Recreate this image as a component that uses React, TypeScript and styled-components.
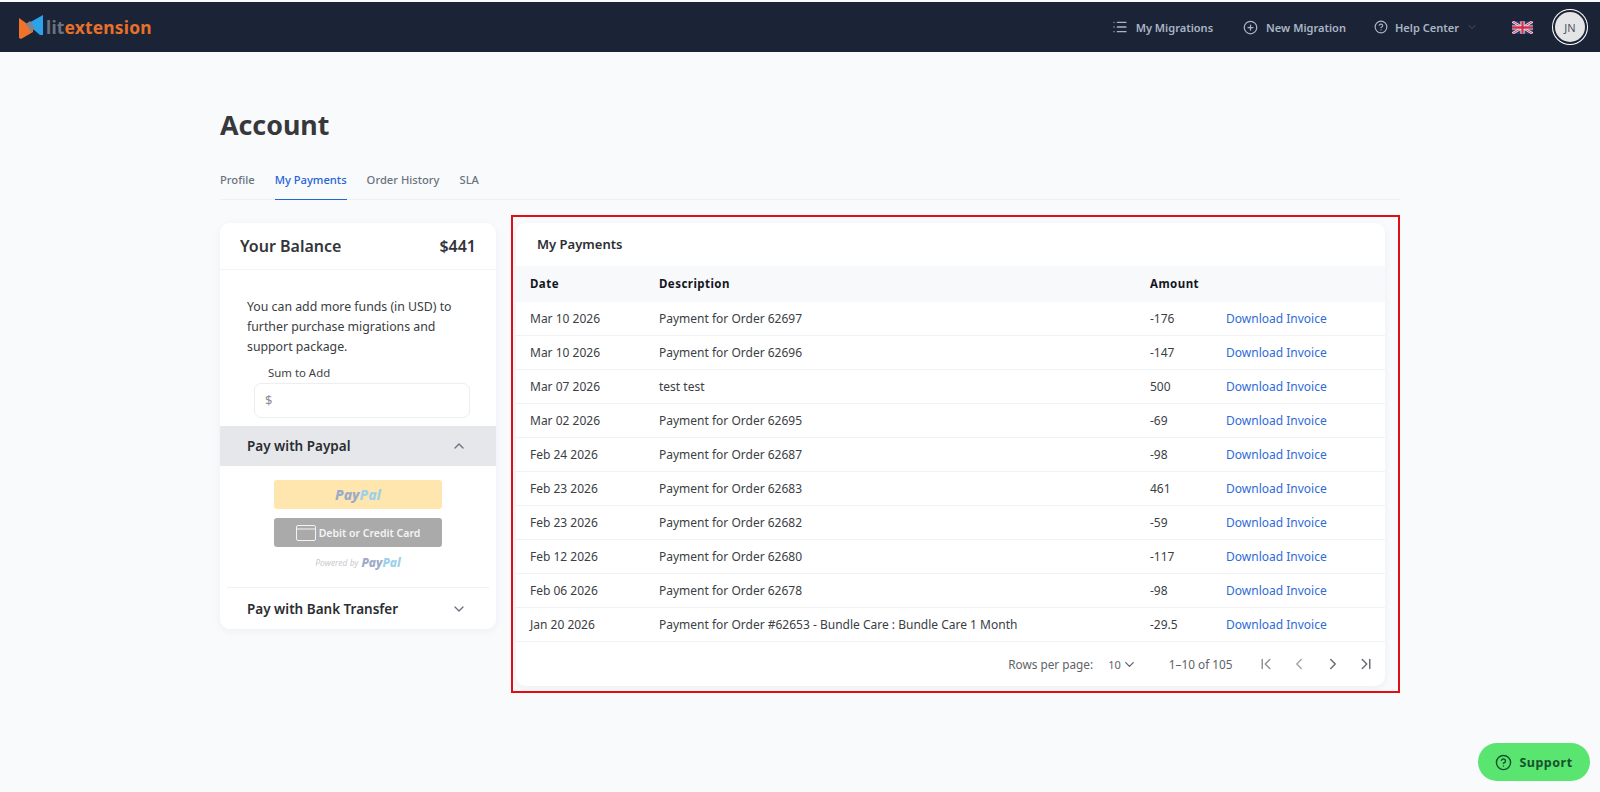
import React from "react";
import styled, { createGlobalStyle } from "styled-components";
import {
  ChevronDown,
  ChevronFirst,
  ChevronLast,
  ChevronLeft,
  ChevronRight,
  ChevronUp,
  CircleHelp,
  CirclePlus,
  List,
} from "lucide-react";

const GlobalStyle = createGlobalStyle`
  html, body {
    margin: 0;
    padding: 0;
    background: #f9fafc;
    font-family: "Noto Sans", "Open Sans", sans-serif;
    color: #2f3237;
  }
  * { box-sizing: border-box; }
`;

const Page = styled.div`
  width: 1600px;
  height: 792px;
  overflow: hidden;
  position: relative;
  padding-top: 2px;
`;

const Header = styled.header`
  height: 50px;
  background: #1b2436;
  display: flex;
  align-items: center;
  padding: 0 15px 0 19px;
`;

const Logo = styled.div`
  display: flex;
  align-items: center;
  gap: 3px;
`;

const LogoText = styled.span`
  font-size: 17.4px;
  font-weight: 700;
  letter-spacing: 0.2px;
  color: #e8702a;

  span {
    color: #6b7480;
  }
`;

const Nav = styled.nav`
  margin-left: auto;
  display: flex;
  align-items: center;
`;

const NavItem = styled.div<{ $gap: number; $iconGap?: number }>`
  display: flex;
  align-items: center;
  gap: ${(p) => p.$iconGap ?? 8}px;
  margin-right: ${(p) => p.$gap}px;
  font-size: 11.05px;
  font-weight: 600;
  color: #aab4c4;
`;

const Avatar = styled.div`
  width: 30px;
  height: 30px;
  margin-left: 22px;
  border-radius: 50%;
  background: #e4e4e6;
  box-shadow: 0 0 0 2px #1b2436, 0 0 0 3px #ffffff;
  display: flex;
  align-items: center;
  justify-content: center;
  font-size: 11px;
  color: #50545c;
`;

const Main = styled.main`
  padding: 0 200px 0 220px;
`;

const Title = styled.h1`
  margin: 53px 0 0;
  font-size: 26.8px;
  line-height: 40px;
  font-weight: 700;
  color: #36383c;
`;

const Tabs = styled.div`
  display: flex;
  gap: 20px;
  margin-top: 20px;
  height: 35px;
  border-bottom: 1px solid #eef0f3;
`;

const Tab = styled.div<{ $active?: boolean }>`
  height: 35px;
  line-height: 30px;
  font-size: 11.2px;
  font-weight: 500;
  color: ${(p) => (p.$active ? "#2563d8" : "#6b7280")};
  border-bottom: 1px solid ${(p) => (p.$active ? "#2563d8" : "transparent")};
`;

const Columns = styled.div`
  display: flex;
  align-items: flex-start;
  margin-top: 15px;
`;

const Card = styled.section`
  background: #ffffff;
  border-radius: 10px;
  box-shadow: 0 2px 8px rgba(30, 40, 60, 0.05);
`;

const BalanceCard = styled(Card)`
  width: 276px;
  margin-top: 8px;
  margin-right: 15px;
  overflow: hidden;
`;

const BalanceHead = styled.div`
  height: 47px;
  display: flex;
  align-items: center;
  justify-content: space-between;
  padding: 0 20px;
  border-bottom: 1px solid #f3f4f6;
  font-size: 16px;
  font-weight: 600;
  color: #33353a;
`;

const BalanceBody = styled.div`
  padding: 27px 20px 8px 27px;
  font-size: 12.3px;
  line-height: 20px;
  color: #3a3d42;
`;

const SumLabel = styled.div`
  margin: 6px 0 0 21px;
  font-size: 11.4px;
  line-height: 20px;
  color: #3f4247;
`;

const SumInput = styled.div`
  margin: 0 0 0 7px;
  width: 216px;
  height: 35px;
  border: 1px solid #eceef1;
  border-radius: 7px;
  padding-left: 10px;
  font-size: 13px;
  line-height: 33px;
  color: #8a8e95;
`;

const AccordionHead = styled.div<{ $open?: boolean }>`
  height: ${(p) => (p.$open ? 40 : 41)}px;
  display: flex;
  align-items: center;
  justify-content: space-between;
  padding: 0 29px 0 27px;
  font-size: 13.5px;
  font-weight: 600;
  color: #2b2d31;
  background: ${(p) => (p.$open ? "#e5e7eb" : "#ffffff")};
`;

const PaypalPanel = styled.div`
  display: flex;
  flex-direction: column;
  align-items: center;
  padding: 14px 0 17px;
  margin: 0 7px;
  border-bottom: 1px solid #f0f1f3;
`;

const PayButton = styled.div<{ $bg: string }>`
  width: 168px;
  height: 29px;
  margin-bottom: 9px;
  border-radius: 3px;
  background: ${(p) => p.$bg};
  display: flex;
  align-items: center;
  justify-content: center;
  gap: 3px;
  color: #f4f4f4;
  font-size: 10.5px;
  font-weight: 600;
`;

const PaypalMark = styled.span<{ $size: number }>`
  font-size: ${(p) => p.$size}px;
  font-weight: 800;
  font-style: italic;
  color: #9aabc9;

  span {
    color: #9ed0ea;
  }
`;

const Powered = styled.div`
  display: flex;
  align-items: center;
  gap: 3px;
  margin-top: -2px;
  font-size: 8.5px;
  font-style: italic;
  color: #c9cbcf;
  height: 16px;
`;

const Highlight = styled.div`
  width: 889px;
  height: 478px;
  border: 2px solid #e00f14;
  padding: 6px 13px 5px 3px;
`;

const PaymentsCard = styled(Card)`
  height: 463px;
  overflow: hidden;
`;

const CardTitle = styled.div`
  height: 43px;
  padding: 7px 0 0 21px;
  font-size: 13px;
  line-height: 28px;
  font-weight: 600;
  color: #2c2e33;
`;

const Table = styled.div`
  display: grid;
  grid-template-columns: 143px 491px 76px 1fr;
`;

const Row = styled.div`
  display: contents;
`;

const HeadCell = styled.div`
  height: 36px;
  line-height: 36px;
  background: #f8f9fb;
  padding-left: 14px;
  font-size: 11.5px;
  font-weight: 700;
  letter-spacing: 0.45px;
  color: #14161d;

  &:nth-child(2),
  &:nth-child(3),
  &:nth-child(4) {
    padding-left: 0;
  }
`;

const Cell = styled.div`
  height: 34px;
  line-height: 33px;
  border-bottom: 1px solid #f1f2f4;
  padding-left: 14px;
  font-size: 12px;
  color: #3b3e44;
  white-space: nowrap;

  &:nth-child(2),
  &:nth-child(3),
  &:nth-child(4) {
    padding-left: 0;
  }
`;

const InvoiceLink = styled.a`
  color: #2f6bd9;
`;

const Pagination = styled.div`
  height: 44px;
  display: flex;
  align-items: center;
  justify-content: flex-end;
  padding-right: 10px;
  font-size: 11.8px;
  color: #5f6368;
`;

const PerPage = styled.div`
  display: flex;
  align-items: center;
  gap: 1px;
  margin: 0 32px 0 15px;
  font-size: 11px;
`;

const PageButtons = styled.div`
  display: flex;
  align-items: center;
  gap: 15.5px;
  margin-left: 24px;
  color: #6b6f75;
`;

const SupportButton = styled.button`
  position: absolute;
  right: 10px;
  bottom: 11px;
  width: 112px;
  height: 38px;
  border: 0;
  border-radius: 20px;
  background: #5ae571;
  color: #14532d;
  display: flex;
  align-items: center;
  justify-content: center;
  gap: 7px;
  font-family: inherit;
  font-size: 12.5px;
  font-weight: 700;
  letter-spacing: 0.5px;
`;

const payments = [
  ["Mar 10 2026", "Payment for Order 62697", "-176"],
  ["Mar 10 2026", "Payment for Order 62696", "-147"],
  ["Mar 07 2026", "test test", "500"],
  ["Mar 02 2026", "Payment for Order 62695", "-69"],
  ["Feb 24 2026", "Payment for Order 62687", "-98"],
  ["Feb 23 2026", "Payment for Order 62683", "461"],
  ["Feb 23 2026", "Payment for Order 62682", "-59"],
  ["Feb 12 2026", "Payment for Order 62680", "-117"],
  ["Feb 06 2026", "Payment for Order 62678", "-98"],
  ["Jan 20 2026", "Payment for Order #62653 - Bundle Care : Bundle Care 1 Month", "-29.5"],
];

const LogoIcon = () => (
  <svg width="24" height="24" viewBox="0 0 24 24">
    <path d="M0 3 L14 13 L14 17 L2 24 L0 23 Z" fill="#f0722b" />
    <path d="M24 0 L24 20 L21 20 L8 9 Z" fill="#2ba3ea" />
    <path d="M7 9 L11 6 L16 13 L12 17 Z" fill="#7d8490" />
  </svg>
);

const FlagIcon = () => (
  <svg width="21" height="13" viewBox="0 0 20 12">
    <rect width="20" height="12" fill="#2b3a78" />
    <path d="M0 0 L20 12 M20 0 L0 12" stroke="#f3e6e8" strokeWidth="2.4" />
    <path d="M0 0 L20 12 M20 0 L0 12" stroke="#d0314a" strokeWidth="0.9" />
    <path d="M10 0 V12 M0 6 H20" stroke="#f3e6e8" strokeWidth="4" />
    <path d="M10 0 V12 M0 6 H20" stroke="#d0314a" strokeWidth="2.2" />
  </svg>
);

const CardIcon = () => (
  <svg width="20" height="16" viewBox="0 0 20 16" fill="none" stroke="#f4f4f4" strokeWidth="1">
    <rect x="0.5" y="0.5" width="19" height="15" rx="1.5" />
    <path d="M0.5 4 H19.5" />
  </svg>
);

const App = () => {
  return (
    <Page>
      <GlobalStyle />
      <Header>
        <Logo>
          <LogoIcon />
          <LogoText>
            <span>lit</span>extension
          </LogoText>
        </Logo>
        <Nav>
          <NavItem $gap={30}>
            <List size={16} />
            My Migrations
          </NavItem>
          <NavItem $gap={28}>
            <CirclePlus size={15} />
            New Migration
          </NavItem>
          <NavItem $gap={34} $iconGap={7}>
            <CircleHelp size={14} />
            Help Center
            <ChevronDown size={12} color="#4b5566" />
          </NavItem>
          <FlagIcon />
          <Avatar>JN</Avatar>
        </Nav>
      </Header>
      <Main>
        <Title>Account</Title>
        <Tabs>
          <Tab>Profile</Tab>
          <Tab $active>My Payments</Tab>
          <Tab>Order History</Tab>
          <Tab>SLA</Tab>
        </Tabs>
        <Columns>
          <BalanceCard>
            <BalanceHead>
              <span>Your Balance</span>
              <span>$441</span>
            </BalanceHead>
            <BalanceBody>
              You can add more funds (in USD) to further purchase migrations and support package.
              <SumLabel>Sum to Add</SumLabel>
              <SumInput>$</SumInput>
            </BalanceBody>
            <AccordionHead $open>
              Pay with Paypal
              <ChevronUp size={16} color="#6b7280" />
            </AccordionHead>
            <PaypalPanel>
              <PayButton $bg="#fee6ae">
                <PaypalMark $size={14}>
                  Pay<span>Pal</span>
                </PaypalMark>
              </PayButton>
              <PayButton $bg="#aaaaaa">
                <CardIcon />
                Debit or Credit Card
              </PayButton>
              <Powered>
                Powered by
                <PaypalMark $size={12}>
                  Pay<span>Pal</span>
                </PaypalMark>
              </Powered>
            </PaypalPanel>
            <AccordionHead>
              Pay with Bank Transfer
              <ChevronDown size={16} color="#6b7280" />
            </AccordionHead>
          </BalanceCard>
          <Highlight>
            <PaymentsCard>
              <CardTitle>My Payments</CardTitle>
              <Table>
                <Row>
                  <HeadCell>Date</HeadCell>
                  <HeadCell>Description</HeadCell>
                  <HeadCell>Amount</HeadCell>
                  <HeadCell />
                </Row>
                {payments.map(([date, description, amount]) => (
                  <Row key={description}>
                    <Cell>{date}</Cell>
                    <Cell>{description}</Cell>
                    <Cell>{amount}</Cell>
                    <Cell>
                      <InvoiceLink>Download Invoice</InvoiceLink>
                    </Cell>
                  </Row>
                ))}
              </Table>
              <Pagination>
                Rows per page:
                <PerPage>
                  10
                  <ChevronDown size={15} />
                </PerPage>
                1–10 of 105
                <PageButtons>
                  <ChevronFirst size={18} color="#8f9298" />
                  <ChevronLeft size={18} color="#a3a6ab" />
                  <ChevronRight size={18} />
                  <ChevronLast size={18} />
                </PageButtons>
              </Pagination>
            </PaymentsCard>
          </Highlight>
        </Columns>
      </Main>
      <SupportButton>
        <CircleHelp size={17} />
        Support
      </SupportButton>
    </Page>
  );
};

export default App;
